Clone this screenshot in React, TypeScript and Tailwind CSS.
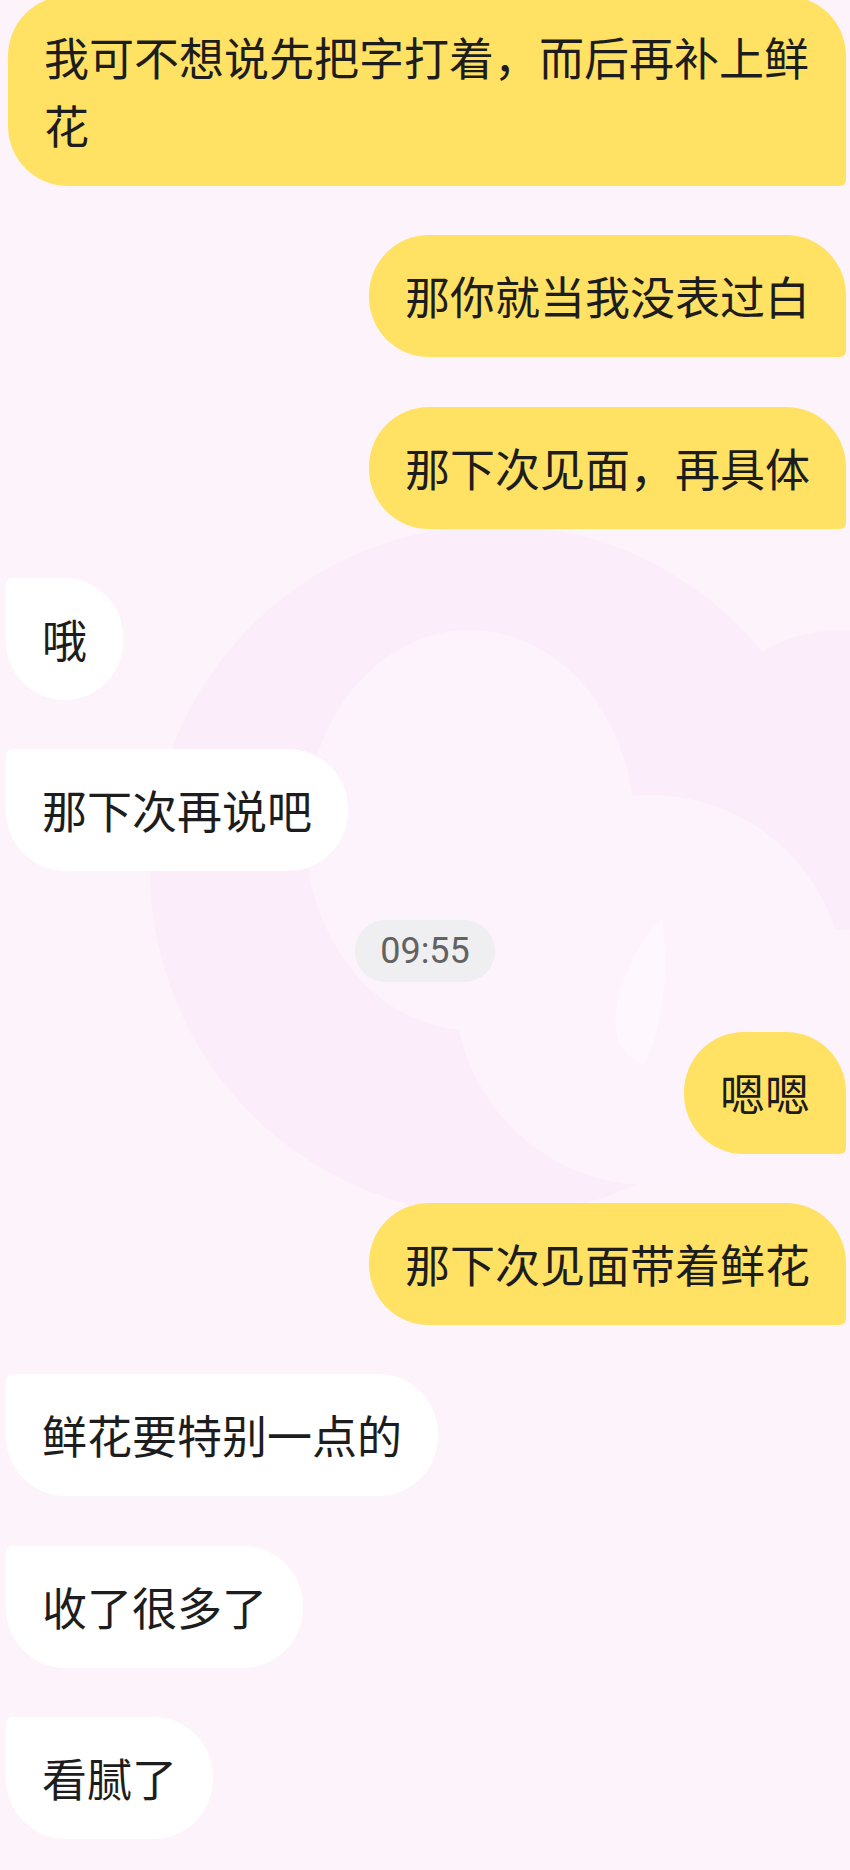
import React from "react";

type Msg =
  | { kind: "me"; text: string }
  | { kind: "other"; text: string }
  | { kind: "time"; text: string };

const messages: Msg[] = [
  { kind: "me", text: "我可不想说先把字打着，而后再补上鲜花" },
  { kind: "me", text: "那你就当我没表过白" },
  { kind: "me", text: "那下次见面，再具体" },
  { kind: "other", text: "哦" },
  { kind: "other", text: "那下次再说吧" },
  { kind: "time", text: "09:55" },
  { kind: "me", text: "嗯嗯" },
  { kind: "me", text: "那下次见面带着鲜花" },
  { kind: "other", text: "鲜花要特别一点的" },
  { kind: "other", text: "收了很多了" },
  { kind: "other", text: "看腻了" },
];

function Watermark() {
  // faint logo shapes behind the chat
  return (
    <svg
      className="absolute inset-0 h-full w-full"
      viewBox="0 0 850 1870"
      preserveAspectRatio="none"
      aria-hidden
    >
      <circle cx="495" cy="870" r="345" fill="#fcedfa" />
      <circle cx="840" cy="780" r="150" fill="#fcedfa" />
      <ellipse cx="470" cy="830" rx="165" ry="200" fill="#fdf3fc" />
      <circle cx="650" cy="990" r="195" fill="#fdf3fc" />
      <path d="M650 930 C 610 990, 600 1050, 645 1065 C 668 1010, 668 960, 662 920 Z" fill="#fef7fd" />
    </svg>
  );
}

export default function App() {
  return (
    <div className="relative min-h-[1870px] w-[850px] overflow-hidden bg-[#fdf3fb]">
      <Watermark />
      <div
        className="relative -mt-[4px] flex flex-col gap-[49.3px] text-[45px] leading-[68px] text-[#1d1d1d]"
        style={{ fontFamily: '"Noto Sans CJK SC", "Noto Sans", sans-serif' }}
      >
        {messages.map((m, i) => {
          if (m.kind === "time") {
            return (
              <div key={i} className="flex justify-center">
                <span
                  className="flex h-[62px] items-center rounded-full bg-[#efeef0] px-[25px] text-[36px] leading-none text-[#626262]"
                  style={{ fontFamily: "Roboto, 'Liberation Sans', sans-serif" }}
                >
                  {m.text}
                </span>
              </div>
            );
          }
          if (m.kind === "me") {
            return (
              <div key={i} className="flex justify-end pr-[4px]">
                <div className="max-w-[838px] rounded-[60px] rounded-br-[6px] bg-[#ffe264] px-[36px] py-[27px]">
                  {m.text}
                </div>
              </div>
            );
          }
          return (
            <div key={i} className="flex justify-start pl-[6px]">
              <div className="max-w-[838px] rounded-[60px] rounded-tl-[6px] bg-white px-[36px] py-[27px]">
                {m.text}
              </div>
            </div>
          );
        })}
      </div>
    </div>
  );
}
